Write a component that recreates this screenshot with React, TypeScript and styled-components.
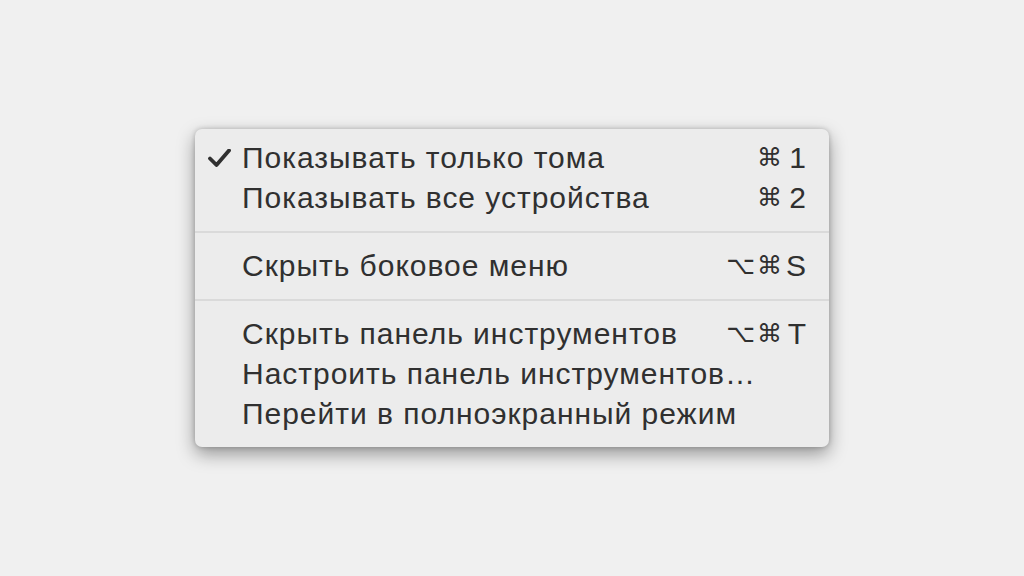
import { createGlobalStyle } from "styled-components";
import styled from "styled-components";

const GlobalStyle = createGlobalStyle`
    html, body {
        margin: 0;
        padding: 0;
        background: #f0f0f0;
    }
    #root {
        height: 576px;
    }
`

const Page = styled.div`
    height: 576px;
    display: flex;
    align-items: center;
    justify-content: center;
    font-family: "Liberation Sans", "DejaVu Sans", Arial, sans-serif;
`
const Menu = styled.div`
    box-sizing: border-box;
    width: 634px;
    margin-top: -1px;
    padding: 9px 0 13px;
    background: #ececec;
    border-radius: 7px;
    box-shadow: 0 7px 18px rgba(0, 0, 0, 0.38), 0 0 5px rgba(0, 0, 0, 0.2);
`
const Item = styled.div`
    display: flex;
    align-items: center;
    height: 40px;
    padding: 0 23px 0 0;
    color: #303030;
    font-size: 30px;
    line-height: 40px;
`
const Gutter = styled.span`
    width: 47px;
    display: flex;
    justify-content: flex-end;
    padding-right: 11px;
    box-sizing: border-box;
`
const Label = styled.span`
    flex: 1;
    white-space: nowrap;
    letter-spacing: 0.98px;
`
const Shortcut = styled.span`
    display: flex;
    align-items: center;
`
const Mods = styled.span`
    font-family: "DejaVu Sans", sans-serif;
    font-size: 25px;
    letter-spacing: 2px;
`
const Key = styled.span`
    width: 22px;
    text-align: right;
`
const Separator = styled.div`
    height: 2px;
    margin: 13px 0;
    background: #dadada;
`

function Check() {
    return (
        <svg width="23" height="18" viewBox="0 0 23 18">
            <path d="M2 9.5 L8.5 16 L21 1.5" fill="none" stroke="#303030" strokeWidth="3.8" strokeLinecap="round" strokeLinejoin="round" />
        </svg>
    )
}

type Entry = { label: string; mods?: string; key?: string; checked?: boolean } | "sep";

const entries: Entry[] = [
    { label: "Показывать только тома", mods: "⌘", key: "1", checked: true },
    { label: "Показывать все устройства", mods: "⌘", key: "2" },
    "sep",
    { label: "Скрыть боковое меню", mods: "⌥⌘", key: "S" },
    "sep",
    { label: "Скрыть панель инструментов", mods: "⌥⌘", key: "T" },
    { label: "Настроить панель инструментов…" },
    { label: "Перейти в полноэкранный режим" },
];

export default function App() {
    return (
        <Page>
            <GlobalStyle />
            <Menu>
                {entries.map((e, i) =>
                    e === "sep" ? (
                        <Separator key={i} />
                    ) : (
                        <Item key={i}>
                            <Gutter>{e.checked && <Check />}</Gutter>
                            <Label>{e.label}</Label>
                            {e.key && (
                                <Shortcut>
                                    <Mods>{e.mods}</Mods>
                                    <Key>{e.key}</Key>
                                </Shortcut>
                            )}
                        </Item>
                    )
                )}
            </Menu>
        </Page>
    )
}
